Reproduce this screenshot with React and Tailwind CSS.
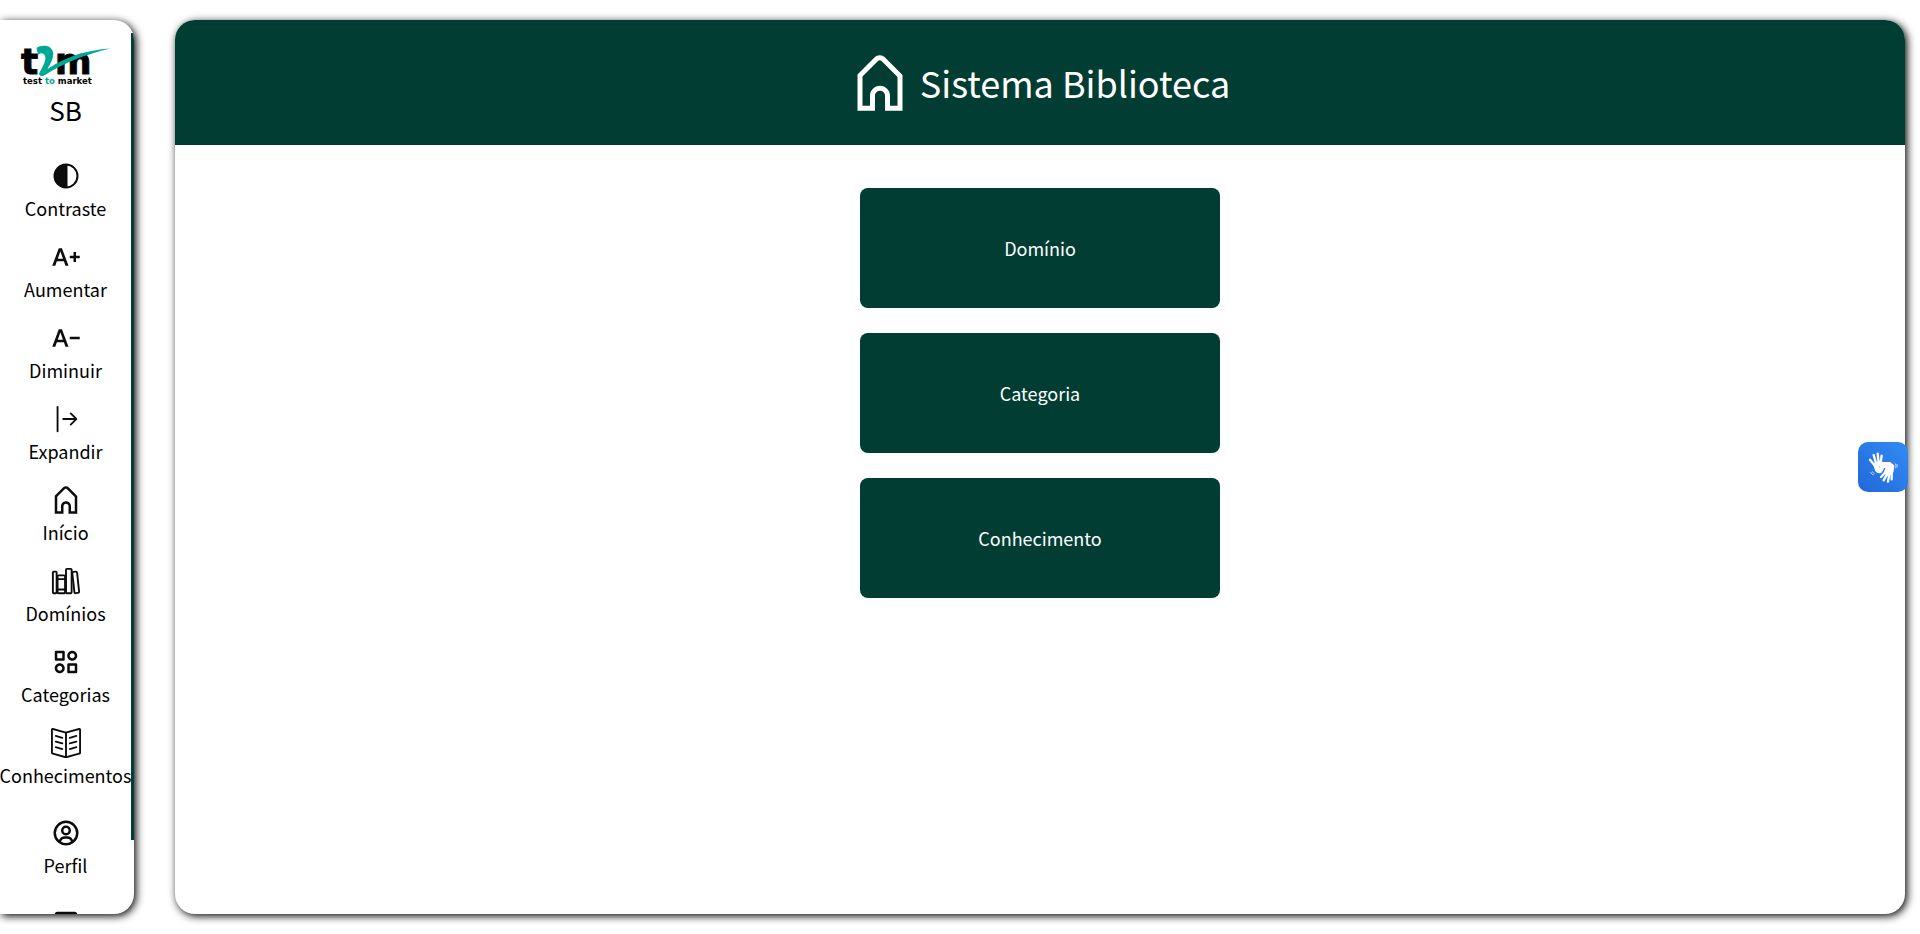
import { IoLibraryOutline } from "react-icons/io5";
import { MdTextIncrease, MdTextDecrease } from "react-icons/md";
import { BsArrowBarRight } from "react-icons/bs";
import { CgHome } from "react-icons/cg";
import { BiCategoryAlt, BiUserCircle, BiExit } from "react-icons/bi";
import { SlBookOpen } from "react-icons/sl";

function ContrastIcon({ className }) {
  return (
    <svg viewBox="0 0 30 30" className={className} aria-hidden="true">
      <circle cx="15" cy="15" r="11.5" fill="none" stroke="currentColor" strokeWidth="2" />
      <path d="M16.5 3.5H15a11.5 11.5 0 0 0 0 23h1.5z" fill="currentColor" />
    </svg>
  );
}

const topItems = [
  { label: "Contraste", Icon: ContrastIcon },
  { label: "Aumentar", Icon: MdTextIncrease },
  { label: "Diminuir", Icon: MdTextDecrease },
  { label: "Expandir", Icon: BsArrowBarRight },
  { label: "Início", Icon: CgHome },
  { label: "Domínios", Icon: IoLibraryOutline },
  { label: "Categorias", Icon: BiCategoryAlt },
  { label: "Conhecimentos", Icon: SlBookOpen },
];

function Logo() {
  return (
    <svg viewBox="0 0 180 88" className="block h-11 w-[90px] overflow-visible" role="img" aria-label="t2m test to market">
      <g fontFamily="'DejaVu Sans', sans-serif" fontWeight="700">
        <text x="0" y="59" fontSize="72" stroke="currentColor" strokeWidth="2">t</text>
        <text x="68" y="59" fontSize="70" stroke="currentColor" strokeWidth="2">m</text>
        <text x="4" y="79" fontSize="17">
          test <tspan fill="#00a896">to</tspan> market
        </text>
      </g>
      <path
        d="M31 8C40 1 62 1 64 17C66 29 58 40 53 50C88 26 132 12 178 9C130 21 84 38 48 62C43 66 34 64 37 57C45 43 51 31 48 24C46 18 40 17 34 21Z"
        fill="#00a896"
      />
    </svg>
  );
}

function HandsIcon() {
  return (
    <svg viewBox="3 4 120 120" className="size-10" fill="currentColor" stroke="currentColor" strokeLinecap="round" strokeLinejoin="round" aria-hidden="true">
      <path strokeWidth="4" d="M36 56L52 48L62 51L54 56C49 58 48 62 50 66L64 68L58 79C50 83 42 79 40 71Z" />
      <path strokeWidth="7" fill="none" d="M40 62L24 42M43 56L35 28M50 53L47 24M56 52L59 30" />
      <path strokeWidth="4" d="M52 59L66 51L84 51L95 60L93 76L88 86L70 84L68 78L73 66L56 64Z" />
      <path strokeWidth="7" fill="none" d="M72 78L57 94M76 84L65 104M82 84L78 108M89 80L89 101" />
      <path strokeWidth="2" fill="none" d="M100 54Q104 60 101 67M105 56Q107 60 105 65M26 80Q28 86 34 88M31 78Q32 82 37 84" />
    </svg>
  );
}

function SideItem({ label, Icon }) {
  return (
    <button type="button" className="flex w-full flex-col items-center gap-[3px] whitespace-nowrap text-[18px] leading-7">
      <Icon className="size-[30px]" />
      <span className="text-black">{label}</span>
    </button>
  );
}

export default function App() {
  return (
    <div className="flex h-screen gap-[41px] overflow-hidden bg-white py-5 pr-[15px] font-['Noto_Sans_CJK_JP','Noto_Sans',sans-serif] text-[#0c0c0c]">
      <aside className="flex w-[134px] shrink-0 overflow-hidden rounded-r-[20px] bg-white shadow-[2px_2px_8px_#000]">
        <nav className="flex min-w-0 flex-1 flex-col items-center" aria-label="Menu">
          <div className="mt-6 flex flex-col items-center">
            <Logo />
            <span className="text-[26px] leading-[44px] text-black">SB</span>
          </div>
          <div className="mt-[29px] flex w-full flex-col gap-5">
            {topItems.map((item) => (
              <SideItem key={item.label} {...item} />
            ))}
          </div>
          <div className="mt-[29px] flex w-full flex-col gap-[29px]">
            <SideItem label="Perfil" Icon={BiUserCircle} />
            <button type="button" aria-label="Sair" className="flex w-full justify-center">
              <BiExit className="size-[30px]" />
            </button>
          </div>
        </nav>
        <div className="mt-[13px] h-[807px] w-[3px] bg-[#013d33]" />
      </aside>

      <div className="flex min-w-0 flex-1 flex-col overflow-hidden rounded-[20px] bg-white shadow-[2px_2px_8px_#000]">
        <header className="flex h-[125px] shrink-0 items-center justify-center gap-[10px] bg-[#013d33] text-white">
          <CgHome className="size-[60px]" />
          <h1 className="pb-[2px] text-[36px] leading-[54px]">Sistema Biblioteca</h1>
        </header>
        <main className="flex flex-col items-center gap-[25px] pt-[43px]">
          {["Domínio", "Categoria", "Conhecimento"].map((label) => (
            <button key={label} type="button" className="h-[120px] w-[360px] rounded-lg bg-[#013d33] text-[18px] text-white">
              {label}
            </button>
          ))}
        </main>
      </div>

      <button
        type="button"
        aria-label="Libras"
        className="fixed top-1/2 right-3 flex size-[50px] -translate-y-1/2 items-center justify-center rounded-[10px] bg-linear-to-tr from-[#2268d8] to-[#338bf5] text-white"
      >
        <HandsIcon />
      </button>
    </div>
  );
}
